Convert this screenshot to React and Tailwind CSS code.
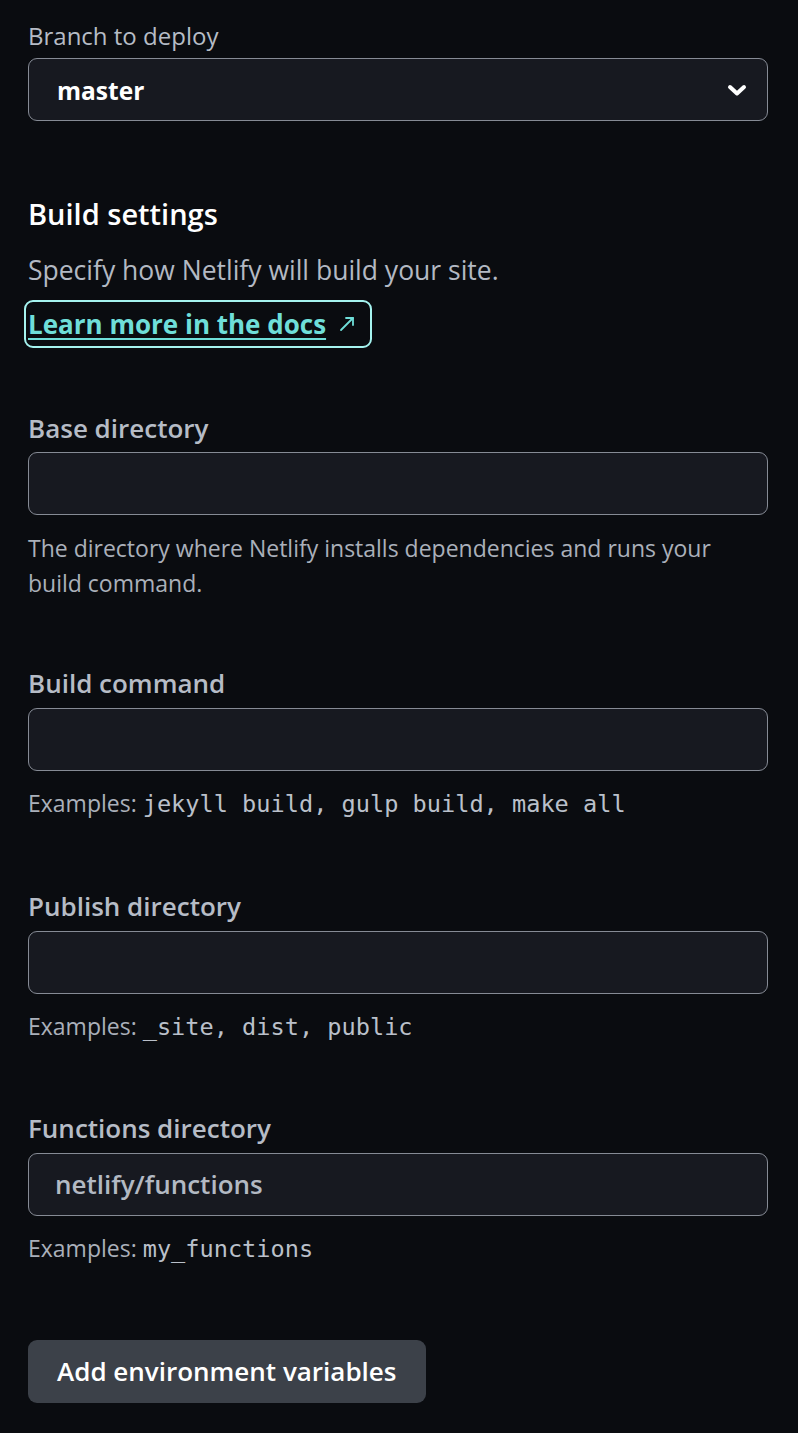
import React from "react";

const sans = { fontFamily: '"Open Sans", "Noto Sans", sans-serif' };
const mono = { fontFamily: '"DejaVu Sans Mono", "Liberation Mono", monospace' };

function Label({ children, className = "" }) {
  return (
    <div className={`text-[26px] leading-[32px] font-semibold text-[#b6bcc6] ${className}`}>{children}</div>
  );
}

function Input({ value }) {
  return (
    <div className="h-[63px] w-full rounded-[9px] border border-[#868b95] bg-[#171920] flex items-center px-[26px]">
      {value ? <span className="text-[26px] font-semibold text-[#b3b9c3]">{value}</span> : null}
    </div>
  );
}

function Help({ children, className = "" }) {
  return <div className={`text-[23px] leading-[35px] text-[#aab0ba] ${className}`}>{children}</div>;
}

function Code({ children }) {
  return (
    <span className="text-[#bac0ca] text-[23.6px] font-medium" style={mono}>
      {children}
    </span>
  );
}

export default function App() {
  return (
    <div className="min-h-[1433px] w-full bg-[#0a0c10] pl-[28px] pr-[30px] pt-[20px] pb-[30px]" style={sans}>
      <div className="text-[24px] leading-[32px] font-medium text-[#b6bcc6]">Branch to deploy</div>
      <div className="mt-[6px] h-[63px] w-full rounded-[9px] border border-[#868b95] bg-[#171920] flex items-center justify-between pl-[28px] pr-[18px]">
        <span className="text-[24.5px] font-bold text-white translate-y-[2px]">master</span>
        <svg width="24" height="24" viewBox="0 0 24 24" fill="none" stroke="white" strokeWidth="4" strokeLinecap="round" strokeLinejoin="round">
          <path d="M5 9l7 6.5L19 9" />
        </svg>
      </div>

      <h2 className="mt-[75px] text-[29px] leading-[36px] font-semibold text-white">Build settings</h2>
      <p className="mt-[21px] text-[26.5px] leading-[34px] text-[#b3b9c3]">Specify how Netlify will build your site.</p>
      <div className="mt-[13px] -ml-[4px]">
        <a href="#" className="inline-flex items-center h-[48px] rounded-[9px] border-2 border-[#a5f3ef] pl-[2px] pr-[14px] text-[#6fded9]">
          <span className="text-[26px] font-bold underline underline-offset-[4px] decoration-2">Learn more in the docs</span>
          <svg className="ml-[12px]" width="18" height="18" viewBox="0 0 18 18" fill="none" stroke="#6fded9" strokeWidth="1.8" strokeLinecap="round" strokeLinejoin="round">
            <path d="M3 15L15 3" />
            <path d="M8 3h7v7" />
          </svg>
        </a>
      </div>

      <Label className="mt-[64px]">Base directory</Label>
      <div className="mt-[8px]"><Input /></div>
      <Help className="mt-[16px]">
        The directory where Netlify installs dependencies and runs your
        <br />
        build command.
      </Help>

      <Label className="mt-[66px]">Build command</Label>
      <div className="mt-[9px]"><Input /></div>
      <Help className="mt-[15px]">
        Examples: <Code>jekyll build, gulp build, make all</Code>
      </Help>

      <Label className="mt-[68px]">Publish directory</Label>
      <div className="mt-[9px]"><Input /></div>
      <Help className="mt-[15px]">
        Examples: <Code>_site, dist, public</Code>
      </Help>

      <Label className="mt-[67px]">Functions directory</Label>
      <div className="mt-[9px]"><Input value="netlify/functions" /></div>
      <Help className="mt-[15px]">
        Examples: <Code>my_functions</Code>
      </Help>

      <button className="mt-[73px] h-[63px] rounded-[9px] bg-[#3c4149] px-[29px] text-[26px] font-semibold text-white">
        Add environment variables
      </button>
    </div>
  );
}
